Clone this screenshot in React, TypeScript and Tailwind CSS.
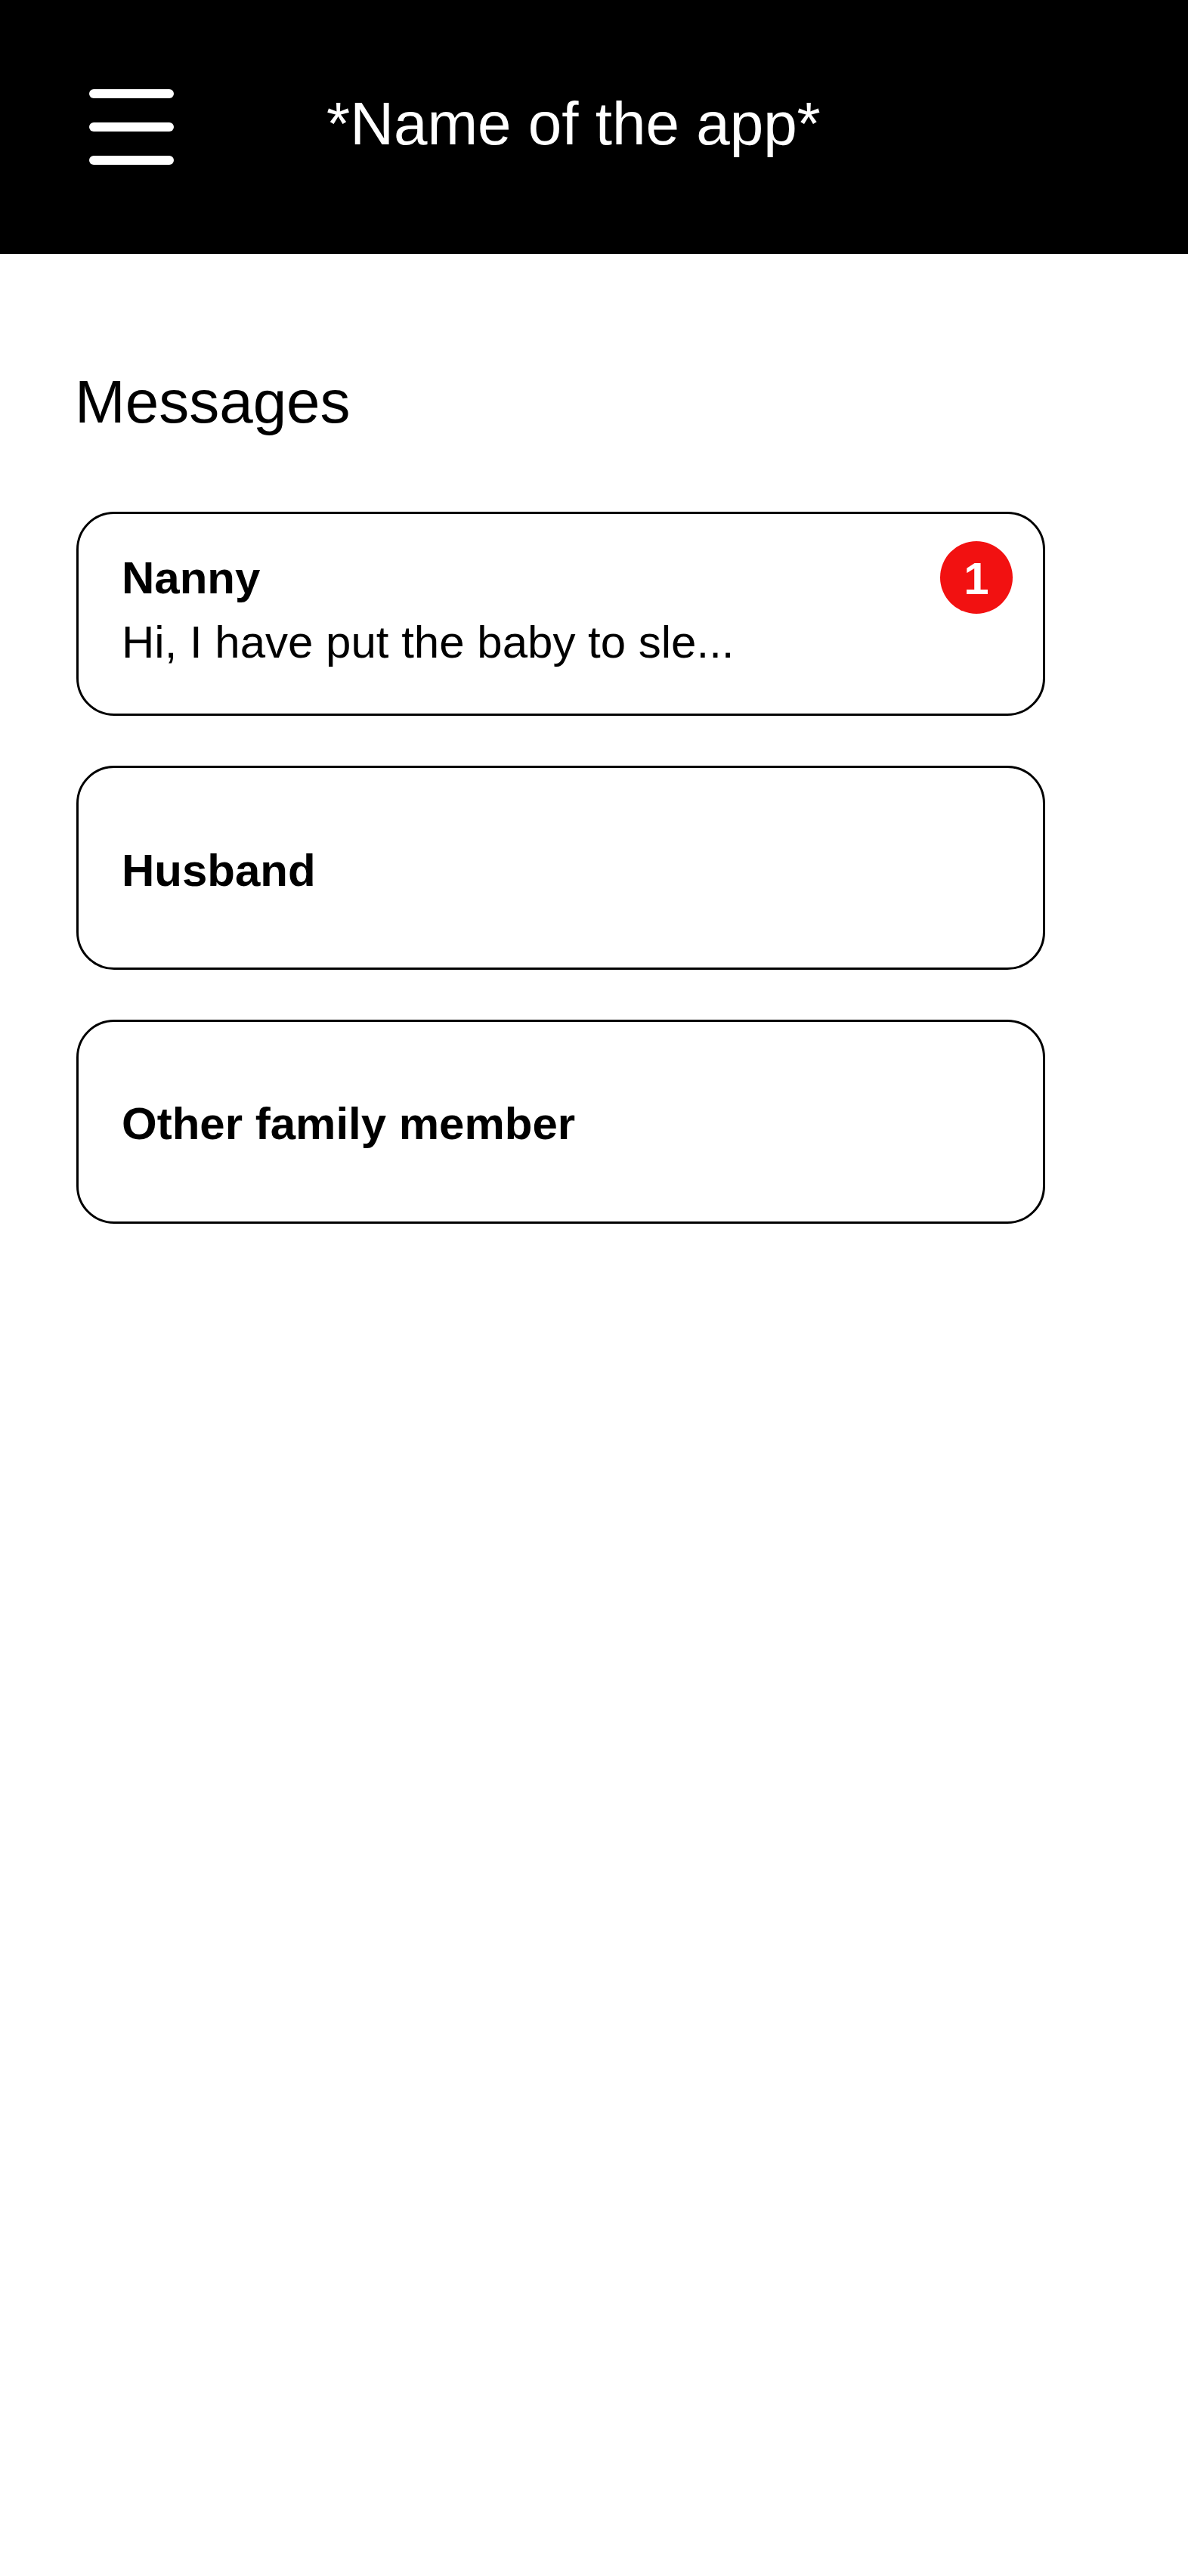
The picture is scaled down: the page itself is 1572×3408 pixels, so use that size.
import React from "react";

const font = { fontFamily: '"Liberation Sans", Arial, Helvetica, sans-serif' };

function Hamburger() {
  return (
    <div className="flex w-[112px] flex-col gap-[32px]">
      <div className="h-[12px] w-full rounded-full bg-white" />
      <div className="h-[12px] w-full rounded-full bg-white" />
      <div className="h-[12px] w-full rounded-full bg-white" />
    </div>
  );
}

export default function App() {
  return (
    <div className="min-h-[3408px] w-full bg-white text-black font-['Liberation_Sans',Arial,sans-serif]" style={font}>
      <header className="flex h-[336px] items-center bg-black pl-[118px]">
        <Hamburger />
        <h1 className="ml-[202px] pb-[8px] text-[80px] font-normal leading-none text-white">
          *Name of the app*
        </h1>
      </header>

      <main className="pl-[101px] pr-[189px]">
        <h2 className="-ml-[2px] mt-[156px] text-[80px] font-normal leading-none">Messages</h2>

        <div className="mt-[105px] flex flex-col gap-[66px]">
          <div className="relative h-[270px] rounded-[50px] border-[3px] border-black pl-[57px] pt-[42px]">
            <div className="text-[60px] font-bold leading-[85px]">Nanny</div>
            <div className="text-[60px] font-normal leading-[85px]">Hi, I have put the baby to sle...</div>
            <div className="absolute right-[40px] top-[36px] flex h-[96px] w-[96px] items-center justify-center rounded-full bg-[#f21111] pt-[4px] text-[60px] font-bold leading-none text-white">
              1
            </div>
          </div>

          <div className="flex h-[270px] items-center rounded-[50px] border-[3px] border-black pl-[57px] pt-[7px]">
            <div className="text-[60px] font-bold leading-none">Husband</div>
          </div>

          <div className="flex h-[270px] items-center rounded-[50px] border-[3px] border-black pl-[57px] pt-[6px]">
            <div className="text-[60px] font-bold leading-none">Other family member</div>
          </div>
        </div>
      </main>
    </div>
  );
}
